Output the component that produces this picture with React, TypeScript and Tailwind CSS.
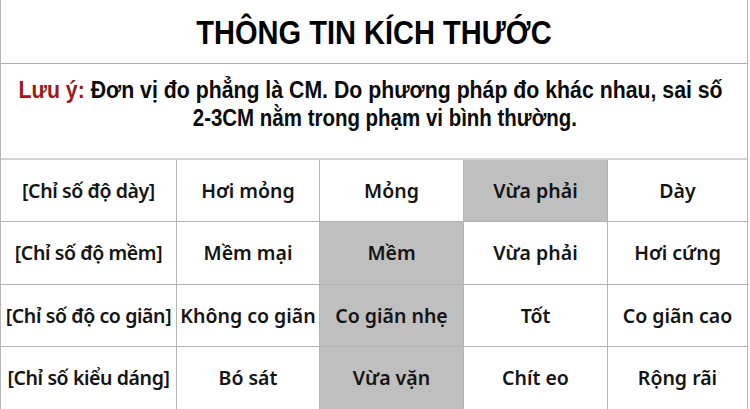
import React from 'react';

const rows: { label: string; values: string[]; active: number }[] = [
  { label: '[Chỉ số độ dày]', values: ['Hơi mỏng', 'Mỏng', 'Vừa phải', 'Dày'], active: 2 },
  { label: '[Chỉ số độ mềm]', values: ['Mềm mại', 'Mềm', 'Vừa phải', 'Hơi cứng'], active: 1 },
  { label: '[Chỉ số độ co giãn]', values: ['Không co giãn', 'Co giãn nhẹ', 'Tốt', 'Co giãn cao'], active: 1 },
  { label: '[Chỉ số kiểu dáng]', values: ['Bó sát', 'Vừa vặn', 'Chít eo', 'Rộng rãi'], active: 1 },
];

export default function App() {
  return (
    <div className="w-[748px] h-[409px] overflow-hidden bg-white border-l border-r border-[#b8b8b8] flex flex-col">
      {/* title */}
      <div className="h-[64px] shrink-0 flex items-center justify-center border-b border-[#b0b0b0]">
        <h1 className="text-[33px] font-bold text-black scale-x-[0.88] leading-none pt-[1px] font-['Liberation_Sans',Arial,sans-serif]">
          THÔNG TIN KÍCH THƯỚC
        </h1>
      </div>

      {/* note */}
      <div className="h-[96px] shrink-0 flex flex-col items-center border-b-2 border-[#d2d2d2] pt-[12px] text-[23px] font-bold leading-[28px] text-[#0a0a0a] whitespace-nowrap font-['Liberation_Sans',Arial,sans-serif]">
        <p className="scale-x-[0.925] -translate-x-[3px]">
          <span className="text-[#9c1a1a]">Lưu ý:</span> Đơn vị đo phẳng là CM. Do phương pháp đo khác nhau, sai số
        </p>
        <p className="scale-x-[0.89] translate-x-[11px]">2-3CM nằm trong phạm vi bình thường.</p>
      </div>

      {/* table */}
      <div className="flex-1 grid grid-cols-[176px_143px_144px_144px_1fr] grid-rows-4 font-['Noto_Sans',sans-serif] text-[19.5px] font-semibold text-[#141414]">
        {rows.map((row, ri) => (
          <React.Fragment key={row.label}>
            <div
              className={`flex items-center justify-center whitespace-nowrap border-r border-[#b4b4b4] ${ri < rows.length - 1 ? 'border-b' : ''}`}
            >
              <span className="tracking-[-0.4px]">{row.label}</span>
            </div>
            {row.values.map((v, ci) => (
              <div
                key={v + ci}
                className={`flex items-center justify-center whitespace-nowrap border-[#b4b4b4] ${ci < 3 ? 'border-r' : ''} ${ri < rows.length - 1 ? 'border-b' : ''} ${ci === row.active ? 'bg-[#bfbfbf]' : ''}`}
              >
                {v}
              </div>
            ))}
          </React.Fragment>
        ))}
      </div>
    </div>
  );
}
